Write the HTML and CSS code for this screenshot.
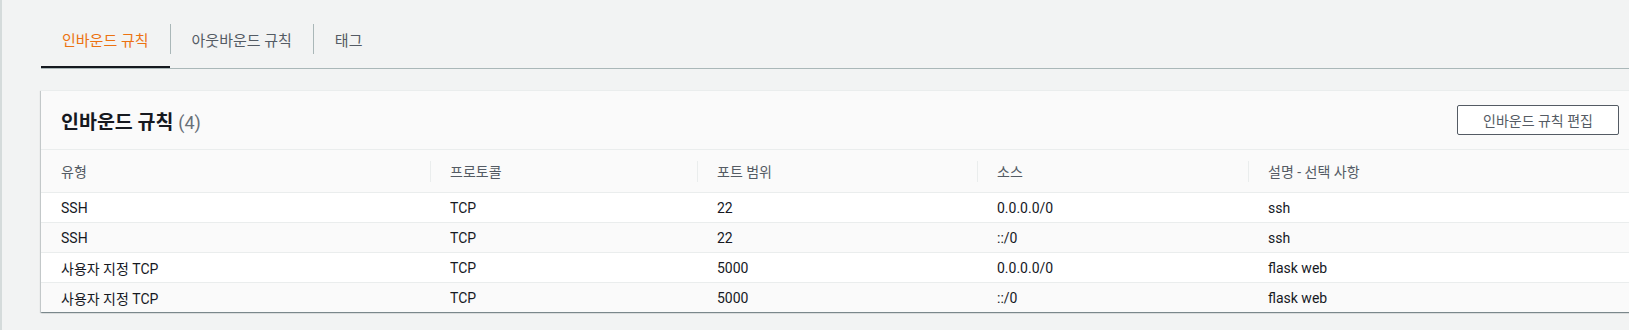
FILE: index.html
```html
<!DOCTYPE html>
<html lang="ko">
<head>
    <meta charset="UTF-8">
    <meta name="viewport" content="width=device-width, initial-scale=1.0">
    <title>보안 그룹 - 인바운드 규칙</title>
    <link rel="stylesheet" href="styles.css">
</head>
<body>

    <div class="page">
        <div class="tabs">
            <div class="tab active">인바운드 규칙</div>
            <span class="tab-sep"></span>
            <div class="tab">아웃바운드 규칙</div>
            <span class="tab-sep"></span>
            <div class="tab">태그</div>
        </div>

        <div class="panel">
            <div class="panel-header">
                <h2>인바운드 규칙 <span class="count">(4)</span></h2>
                <button class="btn">인바운드 규칙 편집</button>
            </div>

            <table class="rules">
                <colgroup>
                    <col class="col-type">
                    <col class="col-proto">
                    <col class="col-port">
                    <col class="col-source">
                    <col class="col-desc">
                </colgroup>
                <thead>
                    <tr>
                        <th>유형</th>
                        <th>프로토콜</th>
                        <th>포트 범위</th>
                        <th>소스</th>
                        <th>설명 - 선택 사항</th>
                    </tr>
                </thead>
                <tbody>
                    <tr>
                        <td>SSH</td>
                        <td>TCP</td>
                        <td>22</td>
                        <td>0.0.0.0/0</td>
                        <td>ssh</td>
                    </tr>
                    <tr>
                        <td>SSH</td>
                        <td>TCP</td>
                        <td>22</td>
                        <td>::/0</td>
                        <td>ssh</td>
                    </tr>
                    <tr>
                        <td>사용자 지정 TCP</td>
                        <td>TCP</td>
                        <td>5000</td>
                        <td>0.0.0.0/0</td>
                        <td>flask web</td>
                    </tr>
                    <tr>
                        <td>사용자 지정 TCP</td>
                        <td>TCP</td>
                        <td>5000</td>
                        <td>::/0</td>
                        <td>flask web</td>
                    </tr>
                </tbody>
            </table>
        </div>
    </div>

</body>
</html>
```

FILE: styles.css
```css
html, body {
    margin: 0;
    overflow: hidden;
}

body {
    font-family: Roboto, "Noto Sans CJK KR", sans-serif;
    background-color: #f2f3f3;
    color: #16191f;
}

.page {
    min-height: 330px;
    box-sizing: border-box;
    border-left: 2px solid #d5dbdb;
    padding: 10px 0 0 39px;
}

/* tabs */
.tabs {
    display: flex;
    align-items: center;
    width: 1598px;
    height: 58px;
    border-bottom: 1px solid #aab7b8;
}

.tab {
    height: 100%;
    display: flex;
    align-items: center;
    padding: 0 21px;
    font-size: 15px;
    color: #545b64;
}

.tab.active {
    color: #ec7211;
    box-shadow: inset 0 -2px 0 #16191f;
}

.tab-sep {
    width: 1px;
    height: 30px;
    background-color: #aab7b8;
}

/* panel */
.panel {
    width: 1598px;
    margin-top: 21px;
    background: #fff;
    border-top: 1px solid #eaeded;
    box-shadow: 0 1px 1px 0 rgba(0, 28, 36, 0.3), 1px 1px 1px 0 rgba(0, 28, 36, 0.15), -1px 1px 1px 0 rgba(0, 28, 36, 0.15);
}

.panel-header {
    height: 58px;
    display: flex;
    align-items: center;
    justify-content: space-between;
    padding: 0 20px;
    background-color: #fafafa;
    border-bottom: 1px solid #eaeded;
}

h2 {
    margin: 0;
    font-size: 19.5px;
    font-weight: bold;
    color: #16191f;
}

.count {
    font-size: 18px;
    font-weight: normal;
    color: #687078;
}

.btn {
    height: 30px;
    padding: 0 25px;
    font-family: inherit;
    font-size: 14px;
    color: #545b64;
    background: #fff;
    border: 1px solid #545b64;
    border-radius: 2px;
    cursor: pointer;
}

/* table */
.rules {
    width: 100%;
    table-layout: fixed;
    border-collapse: collapse;
    font-size: 14px;
}

.col-type { width: 389px; }
.col-proto { width: 267px; }
.col-port { width: 280px; }
.col-source { width: 271px; }

.rules th {
    height: 42px;
    padding: 0 20px;
    text-align: left;
    font-weight: normal;
    color: #545b64;
    background-color: #fafafa;
}

.rules th + th {
    background-image: linear-gradient(#eaeded, #eaeded);
    background-repeat: no-repeat;
    background-position: left center;
    background-size: 1px 21px;
}

.rules td {
    height: 29px;
    padding: 0 20px;
    border-top: 1px solid #eaeded;
    white-space: nowrap;
}

.rules tbody tr:nth-child(even) td {
    background-color: #fafafa;
}
```
